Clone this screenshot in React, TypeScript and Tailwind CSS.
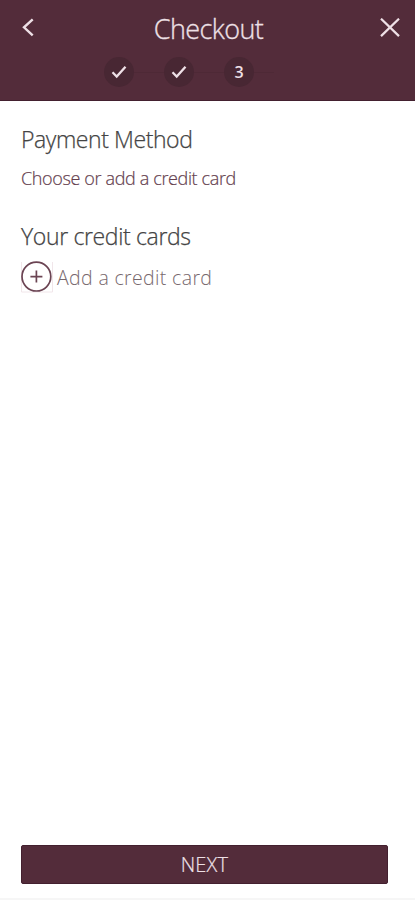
import { Fragment } from "react";

const STEPS = [
  { id: 1, done: true },
  { id: 2, done: true },
  { id: 3, done: false },
];

function BackIcon() {
  return (
    <svg width="12" height="20" viewBox="0 0 12 20" fill="none" stroke="currentColor" strokeWidth="2.4">
      <path d="M10.7 1.3 2 9.3l8.7 8" />
    </svg>
  );
}

function CloseIcon() {
  return (
    <svg width="20" height="20" viewBox="0 0 20 20" fill="none" stroke="currentColor" strokeWidth="2.2">
      <path d="M1 .7l18 17.4M19 .7 1 18.1" />
    </svg>
  );
}

function CheckIcon() {
  return (
    <svg width="16" height="14" viewBox="0 0 16 14" fill="none" stroke="currentColor" strokeWidth="2.3">
      <path d="M1.5 7.3l4.2 4.2L14.5 1.8" />
    </svg>
  );
}

function PlusCircleIcon() {
  return (
    <svg width="32" height="32" viewBox="0 0 32 32" fill="none" stroke="#6b4453">
      <path d="M.5 1v30h31V1" stroke="#f1e6ea" />
      <circle cx="15.4" cy="15.6" r="14.4" strokeWidth="1.7" />
      <path d="M15.4 9.6v12M9.4 15.6h12" strokeWidth="1.7" />
    </svg>
  );
}

export default function App() {
  return (
    <div className="flex h-screen flex-col bg-white font-['Open_Sans',sans-serif] font-light">
      {/* Header */}
      <header className="h-[101px] border-b border-[#43202f] bg-[#532c3a] text-[#eee0e6]">
        <div className="flex h-[55px] items-center justify-between pl-[22px] pr-[15px]">
          <button aria-label="Back">
            <BackIcon />
          </button>
          <h1 className="pl-[3px] pt-[3px] text-[27px] leading-9 tracking-[-0.6px] [-webkit-text-stroke:0.3px]">Checkout</h1>
          <button aria-label="Close">
            <CloseIcon />
          </button>
        </div>

        {/* Steps */}
        <div className="flex items-center pl-[104px] pt-[2px]">
          {STEPS.map((step) => (
            <Fragment key={step.id}>
              <div className="flex size-[30px] items-center justify-center rounded-full bg-[#482733] text-base font-semibold">
                {step.done ? <CheckIcon /> : step.id}
              </div>
              <div className="h-px w-[30px] bg-[#4e2936] last:w-[20px]" />
            </Fragment>
          ))}
        </div>
      </header>

      {/* Content */}
      <main className="flex-1 px-[21px] pt-[22px]">
        <h2 className="text-[23px] leading-8 tracking-[-0.42px] text-[#444] [-webkit-text-stroke:0.25px]">Payment Method</h2>
        <p className="mt-[9px] text-[18px] leading-7 tracking-[-0.36px] text-[#64404e] [-webkit-text-stroke:0.2px]">
          Choose or add a credit card
        </p>
        <h2 className="mt-[28px] text-[23px] leading-8 tracking-[-0.35px] text-[#444] [-webkit-text-stroke:0.25px]">Your credit cards</h2>
        <button className="mt-[9px] flex items-center gap-1 text-[19.5px] leading-[29px] tracking-[0.35px] text-[#77686d]">
          <PlusCircleIcon />
          <span className="pt-px">Add a credit card</span>
        </button>
      </main>

      {/* Footer */}
      <footer className="h-[55px] border-b-2 border-[#f6f6f6] pl-[21px] pr-[27px]">
        <button className="h-[39px] w-full rounded-[2px] border border-[#43202f] bg-[#532c3a] pt-px text-[20px] leading-none tracking-[0.2px] text-[#eee0e6] [-webkit-text-stroke:0.2px]">
          NEXT
        </button>
      </footer>
    </div>
  );
}
